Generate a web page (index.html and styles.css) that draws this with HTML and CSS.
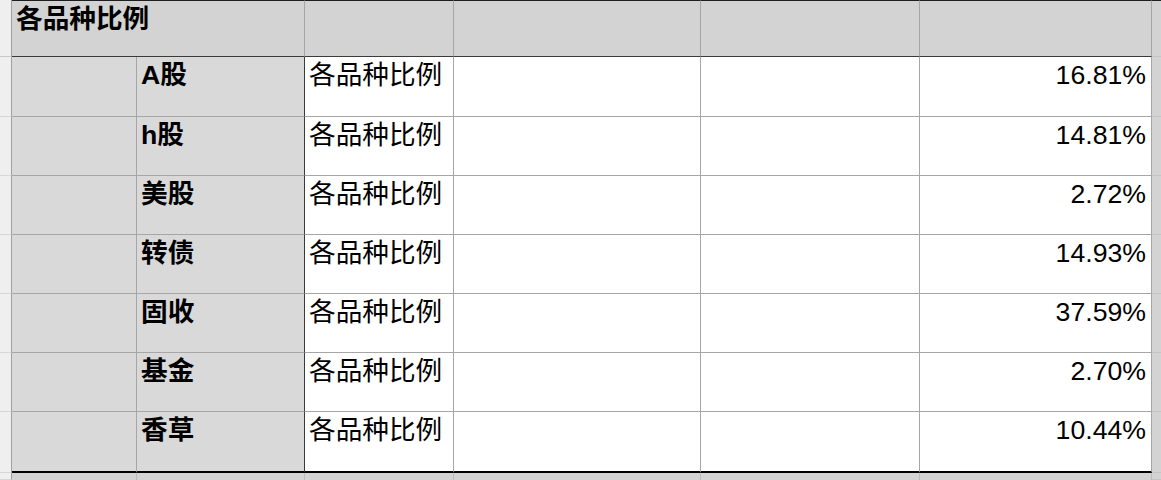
FILE: index.html
```html
<!DOCTYPE html>
<html lang="zh-CN">
<head>
<meta charset="utf-8">
<title>各品种比例</title>
<link rel="stylesheet" href="styles.css">
</head>
<body>
<div class="sheet">
  <!-- header row -->
  <div class="c gut gut-hd"></div>
  <div class="c hd title span2">各品种比例</div>
  <div class="c hd"></div>
  <div class="c hd"></div>
  <div class="c hd"></div>
  <div class="c hd"></div>
  <div class="c side side-hd"></div>

  <!-- data rows -->
  <div class="c gut"></div>
  <div class="c lab"></div>
  <div class="c lab name">A股</div>
  <div class="c txt">各品种比例</div>
  <div class="c"></div>
  <div class="c"></div>
  <div class="c num">16.81%</div>
  <div class="c side"></div>

  <div class="c gut"></div>
  <div class="c lab"></div>
  <div class="c lab name">h股</div>
  <div class="c txt">各品种比例</div>
  <div class="c"></div>
  <div class="c"></div>
  <div class="c num">14.81%</div>
  <div class="c side"></div>

  <div class="c gut"></div>
  <div class="c lab"></div>
  <div class="c lab name">美股</div>
  <div class="c txt">各品种比例</div>
  <div class="c"></div>
  <div class="c"></div>
  <div class="c num">2.72%</div>
  <div class="c side"></div>

  <div class="c gut"></div>
  <div class="c lab"></div>
  <div class="c lab name">转债</div>
  <div class="c txt">各品种比例</div>
  <div class="c"></div>
  <div class="c"></div>
  <div class="c num">14.93%</div>
  <div class="c side"></div>

  <div class="c gut"></div>
  <div class="c lab"></div>
  <div class="c lab name">固收</div>
  <div class="c txt">各品种比例</div>
  <div class="c"></div>
  <div class="c"></div>
  <div class="c num">37.59%</div>
  <div class="c side"></div>

  <div class="c gut"></div>
  <div class="c lab"></div>
  <div class="c lab name">基金</div>
  <div class="c txt">各品种比例</div>
  <div class="c"></div>
  <div class="c"></div>
  <div class="c num">2.70%</div>
  <div class="c side"></div>

  <div class="c gut"></div>
  <div class="c lab last"></div>
  <div class="c lab name last">香草</div>
  <div class="c txt last">各品种比例</div>
  <div class="c last"></div>
  <div class="c last"></div>
  <div class="c num last">10.44%</div>
  <div class="c side"></div>

  <!-- filler row -->
  <div class="c gut"></div>
  <div class="c fill"></div>
  <div class="c fill"></div>
  <div class="c fill"></div>
  <div class="c fill"></div>
  <div class="c fill"></div>
  <div class="c fill"></div>
  <div class="c side"></div>
</div>
</body>
</html>
```

FILE: styles.css
```css
html, body {
  margin: 0;
  padding: 0;
  background: #ffffff;
}

.sheet {
  display: grid;
  grid-template-columns: 12px 125px 168px 149px 247px 219px 232px 1fr;
  grid-template-rows: 57px 60px 59px 59px 59px 59px 59px 61px 1fr;
  width: 1161px;
  height: 480px;
  overflow: hidden;
  font-family: "Liberation Sans", "Noto Sans CJK SC", sans-serif;
  font-size: 26.67px;
  line-height: 32px;
  color: #000;
}

.c {
  box-sizing: border-box;
  border-right: 1px solid #a6a6a6;
  border-bottom: 1px solid #a6a6a6;
  background: #ffffff;
  padding: 2px 4px 0 4px;
  white-space: nowrap;
  overflow: hidden;
}

.gut {
  background: #efefef;
  border-right-color: #9e9e9e;
  border-bottom-color: #d6d6d6;
  padding: 0;
}

.gut-hd {
  border-bottom-color: #c8c8c8;
}

.hd {
  background: #d3d3d3;
  border-top: 1px solid #1e1e1e;
  border-bottom-color: #3a3a3a;
}

.span2 {
  grid-column: span 2;
}

.title {
  font-weight: bold;
  padding: 2px 4px 0 4px;
}

.side {
  background: #d3d3d3;
  border-right: 0;
  border-bottom-color: #c4c4c4;
  padding: 0;
}

.side-hd {
  border-top: 1px solid #1e1e1e;
}

.lab {
  background: #d9d9d9;
}

.name {
  font-weight: bold;
  border-right-color: #3a3a3a;
}

.txt {
  font-weight: normal;
}

.num {
  text-align: right;
  padding-right: 5px;
}

.last {
  border-bottom: 2px solid #000000;
}

.fill {
  background: #d3d3d3;
  border-right-color: #bcbcbc;
  border-bottom: 0;
}
```
